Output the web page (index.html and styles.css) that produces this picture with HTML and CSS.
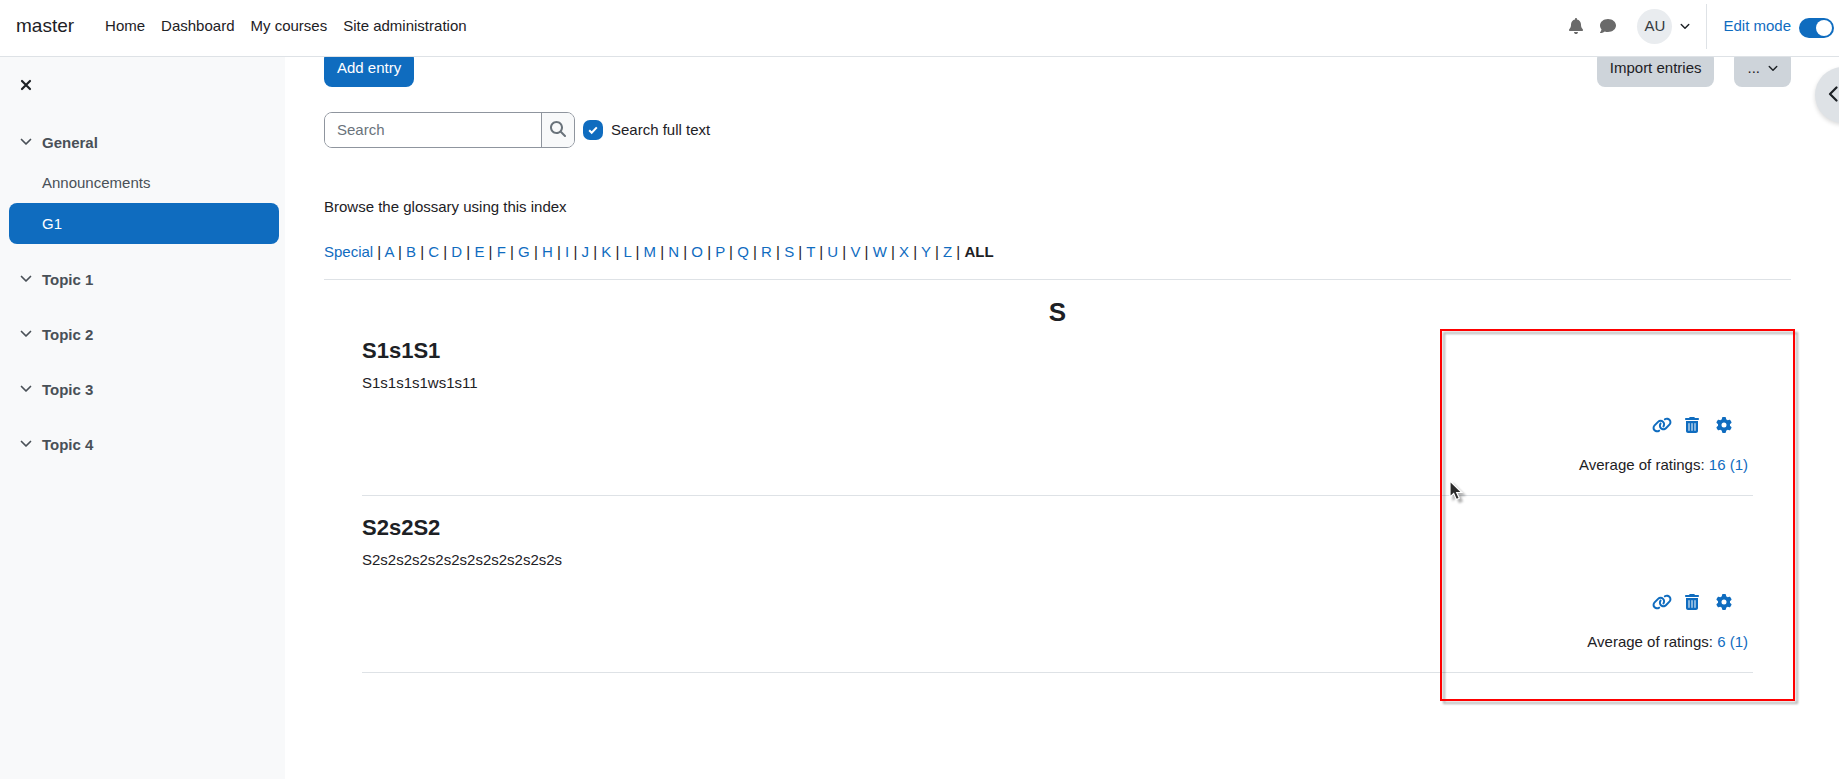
FILE: index.html
```
<!DOCTYPE html>
<html lang="en">
<head>
    <meta charset="UTF-8">
    <meta name="viewport" content="width=device-width, initial-scale=1.0">
    <title>G1 | master</title>
    <link rel="stylesheet" href="styles.css">
</head>
<body>
    <!-- Icon sprite -->
    <svg class="sprite" aria-hidden="true">
        <symbol id="i-bell" viewBox="0 0 448 512"><path d="M224 0c-17.7 0-32 14.3-32 32V51.2C119 66 64 130.6 64 208v18.8c0 47-17.3 92.4-48.5 127.6l-7.4 8.3c-8.4 9.4-10.4 22.9-5.3 34.4S19.4 416 32 416H416c12.6 0 24-7.4 29.2-18.9s3.1-25-5.3-34.4l-7.4-8.3C401.3 319.2 384 273.9 384 226.8V208c0-77.4-55-142-128-156.8V32c0-17.7-14.3-32-32-32zm45.3 493.3c12-12 18.7-28.3 18.7-45.3H224 160c0 17 6.7 33.3 18.7 45.3s28.3 18.7 45.3 18.7s33.3-6.7 45.3-18.7z"/></symbol>
        <symbol id="i-comment" viewBox="0 0 512 512"><path d="M512 240c0 114.9-114.6 208-256 208c-37.1 0-72.3-6.4-104.1-17.9c-11.9 8.7-31.3 20.6-54.3 30.6C73.6 471.1 44.7 480 16 480c-6.5 0-12.3-3.9-14.8-9.9c-2.5-6-1.1-12.8 3.4-17.4l.3-.3c.3-.3 .7-.7 1.3-1.4c1.1-1.2 2.8-3.1 4.9-5.7c4.1-5 9.6-12.4 15.2-21.6c10-16.6 19.5-38.4 21.4-62.9C17.7 326.8 0 285.1 0 240C0 125.1 114.6 32 256 32s256 93.1 256 208z"/></symbol>
        <symbol id="i-search" viewBox="0 0 512 512"><path d="M416 208c0 45.9-14.9 88.3-40 122.7L502.6 457.4c12.5 12.5 12.5 32.8 0 45.3s-32.8 12.5-45.3 0L330.7 376c-34.4 25.2-76.8 40-122.7 40C93.1 416 0 322.9 0 208S93.1 0 208 0S416 93.1 416 208zM208 352a144 144 0 1 0 0-288 144 144 0 1 0 0 288z"/></symbol>
        <symbol id="i-link" viewBox="0 0 640 512"><path d="M579.8 267.7c56.5-56.5 56.5-148 0-204.5c-50-50-128.8-56.5-186.3-15.4l-1.6 1.1c-14.4 10.3-17.7 30.3-7.4 44.6s30.3 17.7 44.6 7.4l1.6-1.1c32.1-22.9 76-19.3 103.8 8.6c31.5 31.5 31.5 82.5 0 114L422.3 334.8c-31.5 31.5-82.5 31.5-114 0c-27.9-27.9-31.5-71.8-8.6-103.8l1.1-1.6c10.3-14.4 6.9-34.4-7.4-44.6s-34.4-6.9-44.6 7.4l-1.1 1.6C206.5 251.2 213 330 263 380c56.5 56.5 148 56.5 204.5 0L579.8 267.7zM60.2 244.3c-56.5 56.5-56.5 148 0 204.5c50 50 128.8 56.5 186.3 15.4l1.6-1.1c14.4-10.3 17.7-30.3 7.4-44.6s-30.3-17.7-44.6-7.4l-1.6 1.1c-32.1 22.9-76 19.3-103.8-8.6C74 372 74 321 105.5 289.5L217.7 177.2c31.5-31.5 82.5-31.5 114 0c27.9 27.9 31.5 71.8 8.6 103.9l-1.1 1.6c-10.3 14.4-6.9 34.4 7.4 44.6s34.4 6.9 44.6-7.4l1.1-1.6C433.5 260.8 427 182 377 132c-56.5-56.5-148-56.5-204.5 0L60.2 244.3z"/></symbol>
        <symbol id="i-trash" viewBox="0 0 448 512"><path d="M135.2 17.7C140.6 6.8 151.7 0 163.8 0H284.2c12.1 0 23.2 6.8 28.6 17.7L320 32h96c17.7 0 32 14.3 32 32s-14.3 32-32 32H32C14.3 96 0 81.7 0 64S14.3 32 32 32h96l7.2-14.3zM32 128H416V448c0 35.3-28.7 64-64 64H96c-35.3 0-64-28.7-64-64V128zm96 64c-8.8 0-16 7.2-16 16V432c0 8.8 7.2 16 16 16s16-7.2 16-16V208c0-8.8-7.2-16-16-16zm96 0c-8.8 0-16 7.2-16 16V432c0 8.8 7.2 16 16 16s16-7.2 16-16V208c0-8.8-7.2-16-16-16zm96 0c-8.8 0-16 7.2-16 16V432c0 8.8 7.2 16 16 16s16-7.2 16-16V208c0-8.8-7.2-16-16-16z"/></symbol>
        <symbol id="i-gear" viewBox="0 0 512 512"><path d="M495.9 166.6c3.2 8.7 .5 18.4-6.4 24.6l-43.3 39.4c1.1 8.3 1.7 16.8 1.7 25.4s-.6 17.1-1.7 25.4l43.3 39.4c6.9 6.2 9.6 15.9 6.4 24.6c-4.4 11.9-9.7 23.3-15.8 34.3l-4.7 8.1c-6.6 11-14 21.4-22.1 31.2c-5.9 7.2-15.7 9.6-24.5 6.8l-55.7-17.7c-13.4 10.3-28.2 18.9-44 25.4l-12.5 57.1c-2 9.1-9 16.3-18.2 17.8c-13.8 2.3-28 3.5-42.5 3.5s-28.7-1.2-42.5-3.5c-9.2-1.5-16.2-8.7-18.2-17.8l-12.5-57.1c-15.8-6.5-30.6-15.1-44-25.4L83.1 425.9c-8.8 2.8-18.6 .3-24.5-6.8c-8.1-9.8-15.5-20.2-22.1-31.2l-4.7-8.1c-6.1-11-11.4-22.4-15.8-34.3c-3.2-8.7-.5-18.4 6.4-24.6l43.3-39.4C64.6 273.1 64 264.6 64 256s.6-17.1 1.7-25.4L22.4 191.2c-6.9-6.2-9.6-15.9-6.4-24.6c4.4-11.9 9.7-23.3 15.8-34.3l4.7-8.1c6.6-11 14-21.4 22.1-31.2c5.9-7.2 15.7-9.6 24.5-6.8l55.7 17.7c13.4-10.3 28.2-18.9 44-25.4l12.5-57.1c2-9.1 9-16.3 18.2-17.8C227.3 1.2 241.5 0 256 0s28.7 1.2 42.5 3.5c9.2 1.5 16.2 8.7 18.2 17.8l12.5 57.1c15.8 6.5 30.6 15.1 44 25.4l55.7-17.7c8.8-2.8 18.6-.3 24.5 6.8c8.1 9.8 15.5 20.2 22.1 31.2l4.7 8.1c6.1 11 11.4 22.4 15.8 34.3zM256 336a80 80 0 1 0 0-160 80 80 0 1 0 0 160z"/></symbol>
        <symbol id="i-down" viewBox="0 0 12 8"><path d="M1.5 1.5 6 6l4.5-4.5" fill="none" stroke="currentColor" stroke-width="1.7" stroke-linecap="round" stroke-linejoin="round"/></symbol>
        <symbol id="i-left" viewBox="0 0 10 16"><path d="M8.5 1.5 2 8l6.5 6.5" fill="none" stroke="currentColor" stroke-width="2.2" stroke-linecap="round" stroke-linejoin="round"/></symbol>
        <symbol id="i-close" viewBox="0 0 12 12"><path d="M2 2l8 8M10 2l-8 8" fill="none" stroke="currentColor" stroke-width="2.2" stroke-linecap="round"/></symbol>
    </svg>

    <header class="navbar">
        <a class="brand" href="#">master</a>
        <nav class="primary-nav">
            <a href="#">Home</a>
            <a href="#">Dashboard</a>
            <a href="#">My courses</a>
            <a href="#">Site administration</a>
        </nav>
        <div class="user-nav">
            <button class="icon-btn" aria-label="Notifications"><svg><use href="#i-bell"/></svg></button>
            <button class="icon-btn" aria-label="Messages"><svg><use href="#i-comment"/></svg></button>
            <button class="user-menu" aria-label="User menu">
                <span class="avatar">AU</span>
                <svg class="caret"><use href="#i-down"/></svg>
            </button>
            <div class="edit-mode">
                <label for="editmode">Edit mode</label>
                <input class="switch" type="checkbox" role="switch" id="editmode" checked>
            </div>
        </div>
    </header>

    <div class="page">
        <aside class="drawer">
            <button class="drawer-close" aria-label="Close course index"><svg><use href="#i-close"/></svg></button>
            <nav class="course-index">
                <section>
                    <button class="section-title"><svg><use href="#i-down"/></svg>General</button>
                    <a class="section-item" href="#">Announcements</a>
                    <a class="section-item active" href="#">G1</a>
                </section>
                <section>
                    <button class="section-title"><svg><use href="#i-down"/></svg>Topic 1</button>
                </section>
                <section>
                    <button class="section-title"><svg><use href="#i-down"/></svg>Topic 2</button>
                </section>
                <section>
                    <button class="section-title"><svg><use href="#i-down"/></svg>Topic 3</button>
                </section>
                <section>
                    <button class="section-title"><svg><use href="#i-down"/></svg>Topic 4</button>
                </section>
            </nav>
        </aside>

        <main class="content">
            <div class="toolbar">
                <button class="btn btn-primary">Add entry</button>
                <div class="toolbar-right">
                    <button class="btn btn-secondary">Import entries</button>
                    <button class="btn btn-secondary btn-more" aria-label="More actions">... <svg class="caret"><use href="#i-down"/></svg></button>
                </div>
            </div>

            <form class="search-form">
                <div class="search-group">
                    <input class="search-input" type="text" placeholder="Search" aria-label="Search">
                    <button class="search-btn" type="button" aria-label="Search"><svg><use href="#i-search"/></svg></button>
                </div>
                <input class="check" type="checkbox" id="fullsearch" checked>
                <label for="fullsearch">Search full text</label>
            </form>

            <p class="browse">Browse the glossary using this index</p>
            <div class="alphabet">
                <a href="#">Special</a> |
                <a href="#">A</a> | <a href="#">B</a> | <a href="#">C</a> | <a href="#">D</a> |
                <a href="#">E</a> | <a href="#">F</a> | <a href="#">G</a> | <a href="#">H</a> |
                <a href="#">I</a> | <a href="#">J</a> | <a href="#">K</a> | <a href="#">L</a> |
                <a href="#">M</a> | <a href="#">N</a> | <a href="#">O</a> | <a href="#">P</a> |
                <a href="#">Q</a> | <a href="#">R</a> | <a href="#">S</a> | <a href="#">T</a> |
                <a href="#">U</a> | <a href="#">V</a> | <a href="#">W</a> | <a href="#">X</a> |
                <a href="#">Y</a> | <a href="#">Z</a> | <b>ALL</b>
            </div>

            <h2 class="letter">S</h2>

            <div class="entries">
                <article class="entry">
                    <h3>S1s1S1</h3>
                    <p>S1s1s1s1ws1s11</p>
                    <div class="actions">
                        <a href="#" aria-label="Entry link: S1s1S1"><svg class="wide"><use href="#i-link"/></svg></a>
                        <a href="#" aria-label="Delete entry: S1s1S1"><svg><use href="#i-trash"/></svg></a>
                        <a href="#" aria-label="Edit entry: S1s1S1"><svg><use href="#i-gear"/></svg></a>
                    </div>
                    <div class="rating">Average of ratings: <a href="#">16 (1)</a></div>
                </article>
                <article class="entry">
                    <h3>S2s2S2</h3>
                    <p>S2s2s2s2s2s2s2s2s2s2s2s2s</p>
                    <div class="actions">
                        <a href="#" aria-label="Entry link: S2s2S2"><svg class="wide"><use href="#i-link"/></svg></a>
                        <a href="#" aria-label="Delete entry: S2s2S2"><svg><use href="#i-trash"/></svg></a>
                        <a href="#" aria-label="Edit entry: S2s2S2"><svg><use href="#i-gear"/></svg></a>
                    </div>
                    <div class="rating">Average of ratings: <a href="#">6 (1)</a></div>
                </article>

                <!-- Highlight over the rating column -->
                <div class="highlight">
                    <svg class="pointer" viewBox="0 0 14 21"><path d="M1 1v16l3.700-3.400L7.300 19.500l3-1.300L7.700 12.500H12.800z" fill="#2b2b2b" stroke="#fff" stroke-width="1.200"/></svg>
                </div>
            </div>
        </main>

        <button class="block-toggle" aria-label="Open block drawer"><svg><use href="#i-left"/></svg></button>
    </div>
</body>
</html>
```
FILE: styles.css
```
* {
    box-sizing: border-box;
}
body {
    margin: 0;
    min-height: 100vh;
    display: flex;
    flex-direction: column;
    background: white;
    color: #1d2125;
    font-family: "Liberation Sans", Arial, sans-serif;
    font-size: 15px;
    line-height: 22px;
}
a {
    color: #0f6cbf;
    text-decoration: none;
}
button, input {
    font: inherit;
    color: inherit;
}
button {
    border: none;
    background: none;
    padding: 0;
    cursor: pointer;
}
svg {
    display: block;
    width: 16px;
    height: 16px;
    fill: currentColor;
}
.sprite {
    display: none;
}

/* Top bar */
.navbar {
    position: sticky;
    top: 0;
    z-index: 10;
    display: flex;
    align-items: center;
    height: 57px;
    padding: 0 5px 4px 16px;
    background: white;
    border-bottom: 1px solid #dee2e6;
}
.brand {
    color: #1d2125;
    font-size: 19px;
    margin-right: 31px;
}
.primary-nav {
    display: flex;
    gap: 16px;
}
.primary-nav a {
    color: #1d2125;
}
.user-nav {
    display: flex;
    align-items: center;
    align-self: stretch;
    margin-left: auto;
}
.icon-btn {
    display: flex;
    justify-content: center;
    width: 32px;
    color: #6a6a6a;
}
.user-menu {
    display: flex;
    align-items: center;
    gap: 8px;
    margin-left: 13px;
}
.avatar {
    width: 35px;
    height: 35px;
    border-radius: 50%;
    background: #e9ecef;
    color: #343a40;
    line-height: 34px;
}
.caret {
    width: 10px;
    height: 7px;
}
.edit-mode {
    display: flex;
    align-items: center;
    gap: 8px;
    height: 45px;
    margin-left: 16px;
    padding-left: 16px;
    border-left: 1px solid #dee2e6;
    color: #0f6cbf;
}
.switch {
    appearance: none;
    width: 35px;
    height: 20px;
    margin: 3px 0 0;
    border-radius: 10px;
    background: #0f6cbf;
}
.switch::before {
    content: "";
    display: block;
    width: 16px;
    height: 16px;
    margin: 2px 2px 2px auto;
    border-radius: 50%;
    background: white;
}

/* Page body */
.page {
    flex: 1;
    display: flex;
    position: relative;
    overflow: hidden;
}

/* Course index */
.drawer {
    width: 285px;
    flex-shrink: 0;
    padding: 20px 6px 0 9px;
    background: #f8f9fa;
}
.drawer-close {
    display: block;
    padding: 2px 11px;
    margin-bottom: 29px;
}
.drawer-close svg {
    width: 12px;
    height: 12px;
}
.course-index section {
    margin-bottom: 15px;
}
.section-title {
    display: flex;
    align-items: center;
    gap: 10px;
    width: 100%;
    height: 40px;
    padding: 2px 11px 0;
    color: #495057;
    font-weight: bold;
}
.section-title svg {
    width: 12px;
    height: 8px;
    margin-bottom: 3px;
}
.section-item {
    display: block;
    padding: 10px 33px 9px;
    border-radius: 8px;
    color: #495057;
}
.section-item.active {
    background: #0f6cbf;
    color: white;
}

/* Main column */
.content {
    flex: 1;
    padding: 0 48px 48px 39px;
}
.toolbar {
    display: flex;
    justify-content: space-between;
    margin-top: -6px; /* slides under the sticky bar */
    margin-bottom: 25px;
}
.toolbar-right {
    display: flex;
    gap: 20px;
}
.btn {
    height: 36px;
    padding: 0 13px 2px;
    border-radius: 8px;
}
.btn-primary {
    background: #0f6cbf;
    color: white;
}
.btn-secondary {
    background: #ced4da;
}
.btn-more {
    display: flex;
    align-items: center;
    gap: 8px;
}
.search-form {
    display: flex;
    align-items: center;
    gap: 8px;
    margin-bottom: 48px;
}
.search-group {
    display: flex;
    height: 36px;
    border: 1px solid #8f959e;
    border-radius: 8px;
    overflow: hidden;
}
.search-input {
    width: 216px;
    padding: 0 12px;
    border: none;
    outline: none;
    background: white;
}
.search-input::placeholder {
    color: #6a737b;
    opacity: 1;
}
.search-btn {
    padding: 0 8px 2px;
    background: #f8f9fa;
    border-left: 1px solid #8f959e;
    color: #6a737b;
}
.check {
    appearance: none;
    width: 20px;
    height: 20px;
    margin: 0;
    border-radius: 7px;
    background: #0f6cbf url("data:image/svg+xml,%3Csvg xmlns='http://www.w3.org/2000/svg' viewBox='0 0 10 10'%3E%3Cpath d='M1.200 5.200 3.700 7.700 8.800 2.400' fill='none' stroke='%23fff' stroke-width='2'/%3E%3C/svg%3E") center / 10px 10px no-repeat;
}
.browse {
    margin: 0 0 23px;
}
.alphabet {
    padding-bottom: 16px;
    border-bottom: 1px solid #dee2e6;
}
.letter {
    margin: 16px 0 9px;
    font-size: 26px;
    line-height: 32px;
    text-align: center;
}

/* Glossary entries */
.entries {
    position: relative;
    padding: 0 38px;
}
.entry {
    margin-bottom: 18px;
    border-bottom: 1px solid #dee2e6;
}
.entry h3 {
    margin: 0 0 7px;
    font-size: 22px;
    line-height: 28px;
}
.entry p {
    margin: 0 0 23px;
}
.actions {
    display: flex;
    justify-content: flex-end;
    gap: 16px;
    margin-bottom: 21px;
    padding-right: 21px;
}
.actions a {
    width: 16px;
}
.actions .wide {
    width: 20px;
}
.rating {
    padding: 0 5px 19px 0;
    text-align: right;
}
.highlight {
    position: absolute;
    top: -8px;
    right: -4px;
    bottom: -28px;
    width: 355px;
    border: 2px solid red;
    filter: drop-shadow(3px 3px 1px rgba(0, 0, 0, 0.3));
    pointer-events: none;
}
.pointer {
    position: absolute;
    top: 149px;
    left: 7px;
    width: 14px;
    height: 21px;
}

/* Right drawer handle, partly off screen */
.block-toggle {
    position: absolute;
    top: 10px;
    right: -32px;
    width: 56px;
    height: 56px;
    padding: 0 0 2px 13px;
    border-radius: 50%;
    background: #dee2e6;
    box-shadow: 0 2px 4px rgba(0, 0, 0, 0.15);
}
.block-toggle svg {
    width: 10px;
}
```
